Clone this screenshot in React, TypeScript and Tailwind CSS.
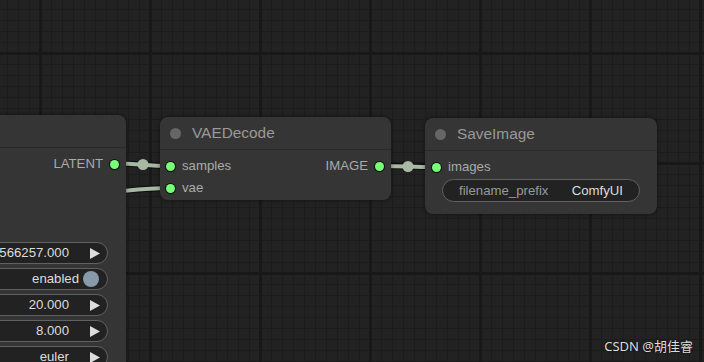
import React from "react";

const font = { fontFamily: '"Liberation Sans", Arial, sans-serif' };

const Slot = ({ side, label }: { side: "in" | "out"; label: string }) => (
  <div
    className={`flex h-[22px] items-center gap-[7px] text-[13.2px] text-[#aaaaaa] ${
      side === "out" ? "flex-row-reverse" : ""
    }`}
  >
    <span className="h-[9px] w-[9px] rounded-full bg-[#77ff77] ring-1 ring-black/70" />
    <span>{label}</span>
  </div>
);

const Title = ({ text }: { text?: string }) => (
  <div className="flex h-[33px] items-center gap-[11px] border-b border-[#2a2a2a] px-[10px] text-[15.4px] text-[#999999]">
    {text && <span className="h-[11px] w-[11px] rounded-full bg-[#666666]" />}
    {text && <span>{text}</span>}
  </div>
);

const Arrow = () => (
  <svg width="10" height="11" viewBox="0 0 10 11" className="shrink-0">
    <path d="M0 0 L10 5.5 L0 11 Z" fill="#dddddd" />
  </svg>
);

const NumWidget = ({ label, value }: { label: string; value: string }) => (
  <div className="flex h-[22px] items-center rounded-full border border-[#616161] bg-[#222222] pl-[14px] pr-[7px] text-[13.2px]">
    <span className="text-[#999999]">{label}</span>
    <span className="ml-auto pr-[21px] text-[#dddddd]">{value}</span>
    <Arrow />
  </div>
);

export default function App() {
  return (
    <div
      className="relative h-[362px] w-[704px] overflow-hidden bg-[#222222]"
      style={font}
    >
      <svg className="absolute inset-0" width="704" height="362">
        <defs>
          <pattern id="minor" x="7" y="9" width="11" height="11" patternUnits="userSpaceOnUse">
            <path d="M0 0.5 H11 M0.5 0 V11" stroke="#1c1c1c" strokeWidth="1" fill="none" />
          </pattern>
          <pattern id="major" x="39" y="52" width="110" height="110" patternUnits="userSpaceOnUse">
            <path d="M0 1.5 H110 M1.5 0 V110" stroke="#181818" strokeWidth="3" fill="none" />
          </pattern>
        </defs>
        <rect width="704" height="362" fill="url(#minor)" />
        <rect width="704" height="362" fill="url(#major)" />

        {/* links */}
        <g fill="none" strokeLinecap="round">
          <path d="M115 163.5 C 140 163.5, 145 166, 170 166" stroke="#000" strokeWidth="6" opacity="0.6" />
          <path d="M115 163.5 C 140 163.5, 145 166, 170 166" stroke="#a9b8a4" strokeWidth="4" />
          <path d="M90 194 C 130 191, 140 188, 170 188" stroke="#000" strokeWidth="6" opacity="0.6" />
          <path d="M90 194 C 130 191, 140 188, 170 188" stroke="#a9b8a4" strokeWidth="4" />
          <path d="M380 166 C 405 166, 411 167, 436 167" stroke="#000" strokeWidth="6" opacity="0.6" />
          <path d="M380 166 C 405 166, 411 167, 436 167" stroke="#a9b8a4" strokeWidth="4" />
        </g>
        <circle cx="143" cy="164.5" r="5.5" fill="#a9b8a4" />
        <circle cx="408" cy="166.5" r="5.5" fill="#a9b8a4" />
      </svg>

      {/* KSampler (mostly off-screen) */}
      <div className="absolute left-[-200px] top-[115px] w-[326px] rounded-[8px] bg-[#353535] shadow-[0_0_4px_rgba(0,0,0,0.5)]">
        <Title />
        <div className="pb-[20px] pt-[5px]">
          <div className="pr-[7px]">
            <Slot side="out" label="LATENT" />
          </div>
          <div className="flex flex-col gap-[4px] pl-[17px] pr-[18px] pt-[67px]">
            <NumWidget label="seed" value="566257.000" />
            <div className="flex h-[22px] items-center rounded-full border border-[#616161] bg-[#222222] pl-[14px] pr-[8px] text-[13.2px]">
              <span className="text-[#999999]">control_after_generate</span>
              <span className="ml-auto pr-[4px] text-[#dddddd]">enabled</span>
              <span className="h-[16px] w-[16px] rounded-full bg-[#8899aa]" />
            </div>
            <NumWidget label="steps" value="20.000" />
            <NumWidget label="cfg" value="8.000" />
            <NumWidget label="sampler_name" value="euler" />
          </div>
        </div>
      </div>

      {/* VAEDecode */}
      <div className="absolute left-[160px] top-[117px] h-[83px] w-[231px] rounded-[8px] bg-[#353535] shadow-[0_0_4px_rgba(0,0,0,0.5)]">
        <Title text="VAEDecode" />
        <div className="flex justify-between pl-[6px] pr-[7px] pt-[5px]">
          <div>
            <Slot side="in" label="samples" />
            <Slot side="in" label="vae" />
          </div>
          <Slot side="out" label="IMAGE" />
        </div>
      </div>

      {/* SaveImage */}
      <div className="absolute left-[425px] top-[118px] h-[96px] w-[232px] rounded-[8px] bg-[#353535] shadow-[0_0_4px_rgba(0,0,0,0.5)]">
        <Title text="SaveImage" />
        <div className="pl-[7px] pt-[5px]">
          <Slot side="in" label="images" />
        </div>
        <div className="mx-[17px] mt-[1px] flex h-[23px] items-center rounded-full border border-[#616161] bg-[#222222] px-[16px] text-[13.2px]">
          <span className="text-[#999999]">filename_prefix</span>
          <span className="ml-auto text-[#dddddd]">ComfyUI</span>
        </div>
      </div>

      {/* watermark */}
      <div
        className="absolute bottom-[6px] right-[11px] text-[13px] text-[#dddddd] [text-shadow:0_0_2px_rgba(0,0,0,0.8)]"
        style={{ fontFamily: '"Noto Sans", "Noto Sans CJK SC", sans-serif' }}
      >
        CSDN @胡佳睿
      </div>
    </div>
  );
}
